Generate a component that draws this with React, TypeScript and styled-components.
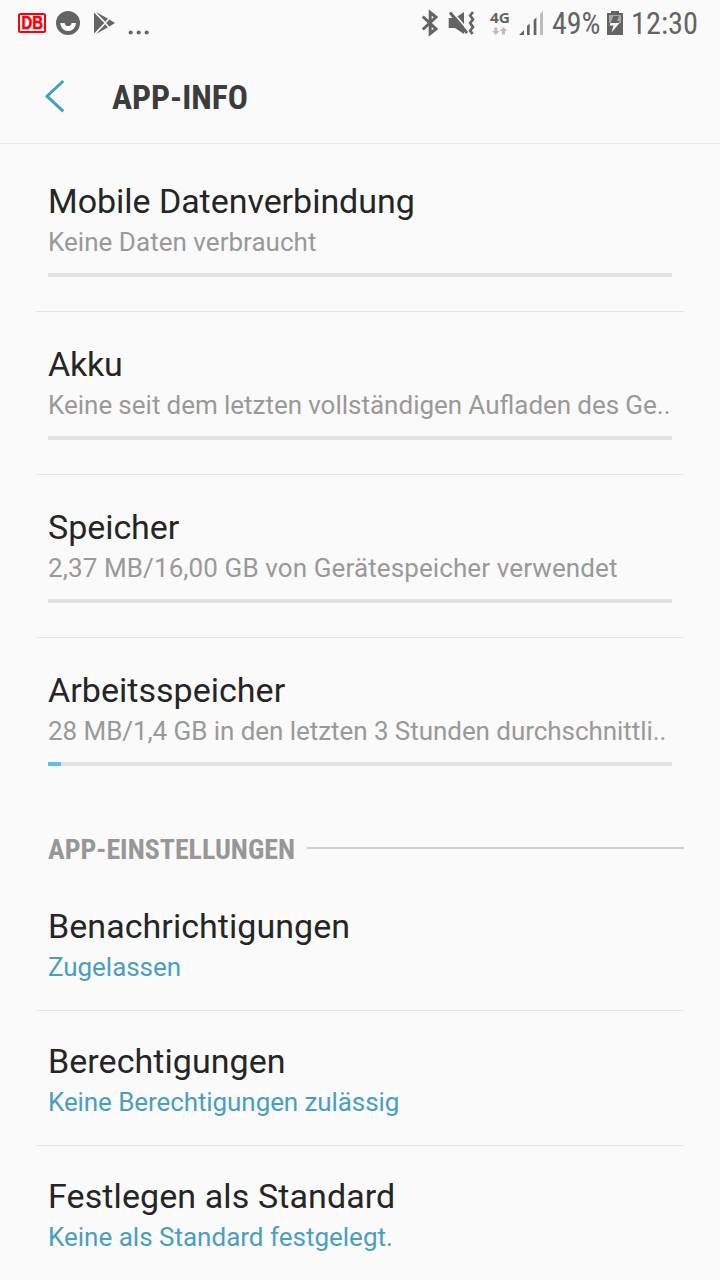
import React from "react";
import styled, { createGlobalStyle } from "styled-components";

const GlobalStyle = createGlobalStyle`
  * { box-sizing: border-box; }
  body { margin: 0; background: #fafafa; }
`;

const Screen = styled.div`
  width: 720px;
  height: 1280px;
  overflow: hidden;
  background: #fafafa;
  font-family: Roboto, "Liberation Sans", sans-serif;
  color: #252525;
`;

const StatusBar = styled.div`
  display: flex;
  justify-content: space-between;
  height: 48px;
  padding: 0 22px 0 18px;
  color: #646464;
`;

const StatusIcon = styled.svg`
  display: block;
  flex: none;
`;

const CondensedText = styled.text<{ $bold?: boolean }>`
  font-family: "Roboto Condensed", Roboto, sans-serif;
  font-stretch: 75%;
  font-weight: ${(p) => (p.$bold ? 700 : 400)};
  fill: currentColor;
`;

const NetworkText = styled.text`
  font-family: "Open Sans", sans-serif;
  font-weight: 700;
  font-size: 15px;
  fill: #646464;
`;

const BadgeText = styled.text`
  font-family: "Liberation Sans", sans-serif;
  font-weight: 700;
  font-size: 18px;
  fill: #fa0008;
  stroke: #fa0008;
  stroke-width: 0.6px;
`;

const AppBar = styled.header`
  display: flex;
  height: 96px;
  padding-left: 44px;
  border-bottom: 1px solid #e6e6e6;
  color: #3c3c3c;
`;

const BackIcon = styled.svg`
  display: block;
  width: 68px;
  height: 95px;
`;

const Heading = styled.h1`
  margin: 0;
  font-size: 34px;
  height: 95px;
`;

const List = styled.div<{ $top?: number }>`
  padding: ${(p) => p.$top ?? 0}px 36px 0;
`;

const UsageRow = styled.div<{ $last?: boolean }>`
  height: ${(p) => (p.$last ? 162 : 163)}px;
  padding: 32px 12px 0;
  border-bottom: ${(p) => (p.$last ? "none" : "1px solid #e4e4e4")};
`;

const SettingRow = styled.div`
  height: 135px;
  padding: 30px 12px 0;
  border-bottom: 1px solid #e4e4e4;
`;

const Title = styled.div<{ $tracking?: number }>`
  height: 45px;
  font-size: 34px;
  line-height: 40px;
  letter-spacing: ${(p) => p.$tracking ?? 0}px;
  white-space: nowrap;
`;

const Summary = styled.div<{ $accent?: boolean; $tracking?: number; $wordGap?: number }>`
  height: 32px;
  font-size: 26px;
  line-height: 32px;
  letter-spacing: ${(p) => p.$tracking ?? 0}px;
  word-spacing: ${(p) => p.$wordGap ?? 0}px;
  white-space: nowrap;
  color: ${(p) => (p.$accent ? "#4a9fc0" : "#999999")};
`;

const Track = styled.div`
  height: 4px;
  margin-top: 15px;
  background: #e1e1e0;
`;

const Fill = styled.div`
  height: 4px;
  background: #5cc0e4;
`;

const SectionHeader = styled.div`
  display: flex;
  align-items: flex-start;
  height: 76px;
  padding: 0 36px 0 48px;
  color: #979797;
`;

const SectionLabel = styled.svg`
  display: block;
  width: 259px;
  height: 76px;
  flex: none;
`;

const SectionLine = styled.div`
  flex: 1;
  height: 2px;
  margin-top: 47px;
  background: #d3d3d3;
`;

const usage = [
  { title: "Mobile Datenverbindung", titleTracking: -0.04, summary: "Keine Daten verbraucht", tracking: 0.03, used: 0 },
  { title: "Akku", titleTracking: -0.25, summary: "Keine seit dem letzten vollständigen Aufladen des Ge..", wordGap: -0.33, used: 0 },
  { title: "Speicher", titleTracking: -0.05, summary: "2,37 MB/16,00 GB von Gerätespeicher verwendet", tracking: 0.11, used: 0 },
  { title: "Arbeitsspeicher", titleTracking: 0.03, summary: "28 MB/1,4 GB in den letzten 3 Stunden durchschnittli..", tracking: -0.055, used: 2.08 },
];

const settings = [
  { title: "Benachrichtigungen", titleTracking: 0.05, summary: "Zugelassen", tracking: -0.05 },
  { title: "Berechtigungen", titleTracking: 0.05, summary: "Keine Berechtigungen zulässig", tracking: -0.085 },
  { title: "Festlegen als Standard", titleTracking: 0.1, summary: "Keine als Standard festgelegt.", tracking: 0 },
];

function Notifications() {
  return (
    <StatusIcon width="140" height="48" viewBox="18 0 140 48">
      <rect x="19" y="14" width="26" height="18" rx="1.500" fill="#fff" stroke="#fa0008" strokeWidth="2" />
      <BadgeText x="21.500" y="29" textLength="21.500" lengthAdjust="spacingAndGlyphs">DB</BadgeText>
      <circle cx="68" cy="23" r="12" fill="#646464" />
      <path d="M60.300 23h4.200a3.700 4 0 0 0 7.200 0H76a7.850 8 0 0 1-15.700 0Z" fill="#fff" />
      <g fill="#646464">
        <path d="M94 12.500 104.300 23 94 33.500Z" />
        <path d="M96 12 108 18.700 105.200 21.700Z" />
        <path d="M96 34 108 27.300 105.200 24.300Z" />
        <path d="M109.300 19.500 115 23 109.300 26.500 106.200 23Z" />
        <circle cx="130.700" cy="32.500" r="2.100" />
        <circle cx="138.700" cy="32.500" r="2.100" />
        <circle cx="146.700" cy="32.500" r="2.100" />
      </g>
    </StatusIcon>
  );
}

function SystemStatus() {
  return (
    <StatusIcon width="278" height="48" viewBox="420 0 278 48">
      <path d="M422.800 16.500 436 28.800 430.200 33.500V12.500L436 17.200 422.800 29.500" fill="none" stroke="#646464" strokeWidth="3" />
      <path d="M448.700 18h6.300l9-6v22l-9-6h-6.300Z" fill="#646464" />
      <path d="M452 11 469 31.500" stroke="#fafafa" strokeWidth="1.800" />
      <path d="M450 12.500 467 33" stroke="#646464" strokeWidth="3" />
      <path d="M473 12l-2.800 3.500 2.800 4-2.800 3.500 2.800 4-2.800 3.500 2.300 3.500" fill="none" stroke="#646464" strokeWidth="2.700" />
      <NetworkText x="490" y="23" textLength="20" lengthAdjust="spacingAndGlyphs">4G</NetworkText>
      <path d="M494.300 27.500h3v3.500h2.200l-3.700 4-3.700-4h2.200ZM502 34.500h3v-3.500h2.200l-3.700-4-3.700 4h2.200Z" fill="#bcbcbc" />
      <path d="M519 35 524 30v5ZM527 26l2.700-2.500V35H527ZM533.700 20l2.700-2.500V35H533.700Z" fill="#646464" />
      <path d="M540 14l3-3V35h-3Z" fill="#bcbcbc" />
      <CondensedText x="552" y="34" fontSize="31" textLength="48.500" lengthAdjust="spacingAndGlyphs">49%</CondensedText>
      <path d="M607 13h4v-2h8v2h4v22h-16Z" fill="#646464" />
      <path d="M609 15h12v8h-12Z" fill="#a9a9a9" />
      <path d="M613.500 16h5.500l-2 5h3l-3 3h-7Z" fill="#646464" />
      <path d="M610.500 23h9l-8 9.500 2-7h-4Z" fill="#fafafa" />
      <CondensedText x="631" y="34" fontSize="31" textLength="67" lengthAdjust="spacingAndGlyphs">12:30</CondensedText>
    </StatusIcon>
  );
}

export default function App() {
  return (
    <>
      <GlobalStyle />
      <Screen>
        <StatusBar>
          <Notifications />
          <SystemStatus />
        </StatusBar>
        <AppBar>
          <BackIcon viewBox="44 48 68 95">
            <path d="M63.300 81 47 96.200 63.300 111.300" fill="none" stroke="#459fc1" strokeWidth="3" />
          </BackIcon>
          <Heading>
            <svg width="140" height="95" viewBox="112 48 140 95">
              <CondensedText $bold x="112" y="109" fontSize="34" textLength="136" lengthAdjust="spacingAndGlyphs">APP-INFO</CondensedText>
            </svg>
          </Heading>
        </AppBar>
        <List $top={5}>
          {usage.map((item, i) => (
            <UsageRow key={item.title} $last={i === usage.length - 1}>
              <Title $tracking={item.titleTracking}>{item.title}</Title>
              <Summary $tracking={item.tracking} $wordGap={item.wordGap}>{item.summary}</Summary>
              <Track>
                <Fill style={{ width: `${item.used}%` }} />
              </Track>
            </UsageRow>
          ))}
        </List>
        <SectionHeader>
          <SectionLabel viewBox="48 800 259 76">
            <CondensedText $bold x="48" y="859" fontSize="28" textLength="247" lengthAdjust="spacingAndGlyphs">APP-EINSTELLUNGEN</CondensedText>
          </SectionLabel>
          <SectionLine />
        </SectionHeader>
        <List>
          {settings.map((item) => (
            <SettingRow key={item.title}>
              <Title $tracking={item.titleTracking}>{item.title}</Title>
              <Summary $accent $tracking={item.tracking}>{item.summary}</Summary>
            </SettingRow>
          ))}
        </List>
      </Screen>
    </>
  );
}
